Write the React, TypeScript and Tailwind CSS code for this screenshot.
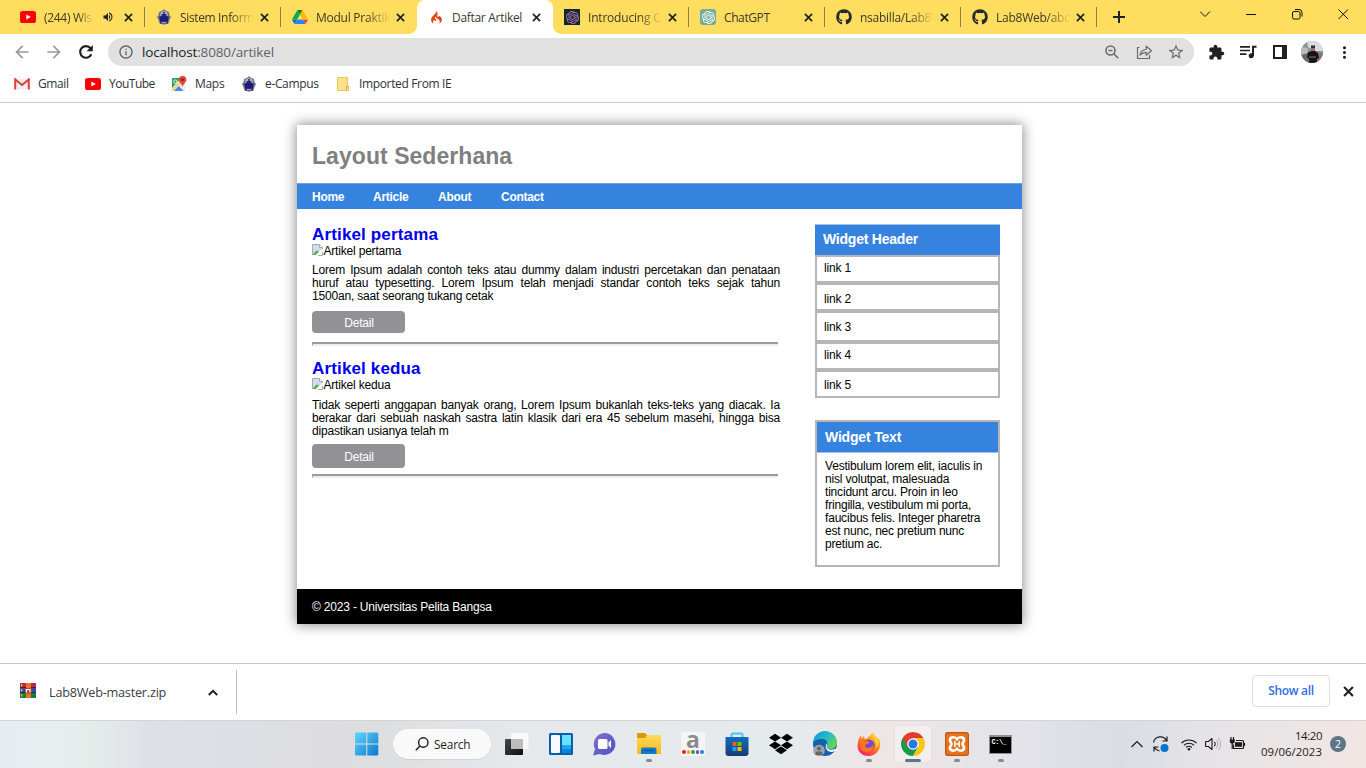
import React from "react";
import { MdArrowBack, MdArrowForward, MdInfoOutline, MdStarBorder, MdExtension, MdMoreVert, MdVolumeUp } from "react-icons/md";
import { FaDropbox, FaGithub } from "react-icons/fa";
import { SiCodeigniter, SiOpenai } from "react-icons/si";

const Cross = ({ size = 9, className = "" }: { size?: number; className?: string }) => (
  <svg className={className} width={size} height={size} viewBox="0 0 10 10" fill="none" stroke="#202124" strokeWidth="1.900">
    <path d="m1 1 8 8M9 1 1 9" />
  </svg>
);

const YouTube = () => (
  <svg width="16" height="12" viewBox="0 0 16 12">
    <rect width="16" height="12" rx="2.6" fill="#f00" />
    <path d="M6.3 3.4 10.8 6 6.3 8.6z" fill="#fff" />
  </svg>
);

const Campus = () => (
  <svg width="14" height="16" viewBox="0 0 14 16">
    <path d="M7 .3 9.200 1.800 12 3 12.500 6 14 8 12.600 11 11.500 14.600 7 15.700 2.500 14.600 1.400 11 0 8 1.500 6 2 3 4.800 1.800z" fill="#77768f" />
    <circle cx="7" cy="6" r="3.800" fill="#b9b5b8" />
    <path d="M6.200 3h1.600v2h1.700v2h-5V5h1.700z" fill="#2a2980" />
    <path d="M2.200 7.500 7 6.500l4.800 1-.8 4.500H3z" fill="#1e1d78" />
    <path d="M3 12.200h8v2.300H3z" fill="#1e1d78" />
    <path d="M4.500 13.200h5v1h-5z" fill="#d9b6a8" />
  </svg>
);

const Drive = () => (
  <svg width="16" height="14" viewBox="0 0 87.3 78">
    <path d="m6.6 66.85 3.85 6.65c.8 1.4 1.95 2.5 3.3 3.3l13.75-23.8h-27.5c0 1.55.4 3.1 1.2 4.5z" fill="#0066da" />
    <path d="m43.65 25-13.75-23.8c-1.35.8-2.5 1.9-3.3 3.3l-25.4 44a9.06 9.06 0 0 0 -1.2 4.5h27.5z" fill="#00ac47" />
    <path d="m73.55 76.8c1.35-.8 2.5-1.9 3.3-3.3l1.6-2.75 7.65-13.25c.8-1.4 1.2-2.95 1.2-4.5h-27.502l5.852 11.5z" fill="#ea4335" />
    <path d="m43.65 25 13.75-23.8c-1.35-.8-2.9-1.2-4.5-1.2h-18.5c-1.6 0-3.15.45-4.5 1.2z" fill="#00832d" />
    <path d="m59.8 53h-32.3l-13.75 23.8c1.35.8 2.9 1.2 4.5 1.2h50.8c1.6 0 3.15-.45 4.5-1.2z" fill="#2684fc" />
    <path d="m73.4 26.5-12.7-22c-.8-1.4-1.95-2.5-3.3-3.3l-13.75 23.8 16.15 28h27.45c0-1.55-.4-3.1-1.2-4.5z" fill="#ffba00" />
  </svg>
);

const Gmail = () => (
  <svg width="16" height="12" viewBox="0 0 16 12">
    <path d="M1 .5h14v11H1z" fill="#eeeeee" />
    <path d="M1.200 11.500V1.400L8 7l6.800-5.600v10.100" fill="none" stroke="#d8433a" strokeWidth="2" />
  </svg>
);

const Maps = () => (
  <svg width="16" height="16" viewBox="0 0 16 16">
    <rect x="1" y="2" width="13" height="13" rx="1" fill="#e8eaed" />
    <path d="M1 3a1 1 0 0 1 1-1h8L1 12z" fill="#1fa463" />
    <path d="M1 12.500 11 2.500l2 2L2 15a1 1 0 0 1-1-1z" fill="#fdd663" />
    <path d="M3 15 7.700 10l4.800 5z" fill="#4285f4" />
    <circle cx="4.4" cy="5.6" r="1.7" fill="none" stroke="#fff" strokeWidth=".9" />
    <path d="M11.600 0a3.800 3.800 0 0 1 3.800 3.800c0 2.700-3 3.800-3.800 7-.8-3.200-3.800-4.300-3.800-7A3.800 3.800 0 0 1 11.600 0z" fill="#e84435" />
    <circle cx="11.6" cy="3.8" r="1.3" fill="#7c1c15" />
  </svg>
);

const Folder = () => (
  <svg width="12" height="14" viewBox="0 0 12 14">
    <path d="M.5.5h10v9h1v4H.5z" fill="#ffe08a" stroke="#e8c65e" />
    <path d="M9.5 13.5v-4h2" fill="none" stroke="#dcae37" />
  </svg>
);

type Tab = { text: string; icon: React.ReactNode; width: string; track: string; active?: boolean; sound?: boolean; line?: boolean; full?: boolean };

const tabs: Tab[] = [
  { text: "(244) Wis", icon: <YouTube />, width: "w-[50px]", track: "tracking-[-0.3px]", sound: true, line: true },
  { text: "Sistem Inform", icon: <Campus />, width: "w-[74px]", track: "tracking-[-0.35px]", line: true },
  { text: "Modul Praktik", icon: <Drive />, width: "w-[74px]", track: "tracking-[-0.25px]" },
  { text: "Daftar Artikel", icon: <SiCodeigniter size={13} color="#dd4814" />, width: "w-[76px]", track: "tracking-[-0.3px]", active: true, full: true },
  { text: "Introducing C", icon: <span className="flex size-4 items-center justify-center bg-[#122b22]"><SiOpenai size={13} color="#c56fd3" /></span>, width: "w-[74px]", track: "tracking-[-0.2px]", line: true },
  { text: "ChatGPT", icon: <span className="flex size-4 items-center justify-center rounded-[3px] bg-[#75ac9d]"><SiOpenai size={13} color="#fff" /></span>, width: "w-[74px]", track: "tracking-[-0.4px]", line: true, full: true },
  { text: "nsabilla/Lab8W", icon: <FaGithub size={16} color="#24292f" />, width: "w-[74px]", track: "tracking-[-0.25px]", line: true },
  { text: "Lab8Web/abo", icon: <FaGithub size={16} color="#24292f" />, width: "w-[74px]", track: "tracking-[-0.25px]", line: true },
];

function TabStrip() {
  return (
    <div className="flex h-[34px] bg-[#ffdd5f] pl-[9px]">
      {tabs.map((t) => (
        <div key={t.text} className={`relative flex w-[136px] shrink-0 items-center pl-[11px] ${t.active ? "rounded-t-lg bg-white" : ""}`}>
          {t.active && (
            <>
              <span className="absolute bottom-0 -left-2 size-2 bg-[radial-gradient(circle_at_0_0,#ffdd5f_7.5px,#fff_8px)]" />
              <span className="absolute -right-2 bottom-0 size-2 bg-[radial-gradient(circle_at_100%_0,#ffdd5f_7.5px,#fff_8px)]" />
            </>
          )}
          <span className="flex w-4 justify-center">{t.icon}</span>
          <span className={`ml-2 overflow-hidden pt-px text-[12px] whitespace-nowrap text-[#3c3a2c] ${t.width} ${t.track} ${t.full ? "" : "[mask-image:linear-gradient(to_right,#000_68%,transparent)]"}`}>{t.text}</span>
          {t.sound && <MdVolumeUp size={12} color="#202124" className="ml-2" />}
          <Cross className="absolute left-[115px]" />
          {t.line && <span className="absolute top-[7px] right-0 h-5 w-px bg-[#8f7f45]" />}
        </div>
      ))}
      <svg className="mt-[11px] ml-4" width="12" height="12" viewBox="0 0 12 12" stroke="#202124" strokeWidth="2"><path d="M6 0v12M0 6h12" /></svg>
      <div className="mt-2 ml-auto flex h-3 items-center pr-[8px]">
        <svg width="159" height="12" viewBox="0 0 159 12" fill="none" stroke="#111" strokeWidth="1" className="-mr-px">
          <path d="M.5 3.500 5.500 8.500l5-5" transform="translate(-.5 0)" />
          <path d="M46 6.500h10" />
          <path d="M95 1.500h4a3 3 0 0 1 3 3v4" />
          <rect x="92.500" y="3.500" width="7.500" height="7.500" rx="1.500" />
          <path d="m138.500 1.500 9.500 9.500m0-9.500-9.500 9.500" />
        </svg>
      </div>
    </div>
  );
}

const Avatar = () => (
  <svg width="22" height="22" viewBox="0 0 22 22">
    <defs><clipPath id="av"><circle cx="11" cy="11" r="11" /></clipPath></defs>
    <g clipPath="url(#av)">
      <path d="M0 0h22v22H0z" fill="#8d9290" />
      <path d="M6 0h16v10H14L7 6z" fill="#d8dde2" />
      <path d="M0 6l7 1v6l-7 2z" fill="#b9bbb4" />
      <path d="M0 14l7-2 1 10H0z" fill="#646b63" />
      <path d="M16 12h6v10h-6z" fill="#8b7569" />
      <path d="M10 4.500h4v3h-4z" fill="#352c32" />
      <path d="M10 7h4v3.500h-4z" fill="#a06f60" />
      <path d="M7 11l4-1h3l3 2 1 5-2 1v4H8v-4l-2-2z" fill="#15161c" />
      <path d="M8 15.500h7v1H8z" fill="#93756d" />
    </g>
  </svg>
);

function Toolbar() {
  return (
    <div className="flex h-9 items-center bg-white">
      <MdArrowBack size={20} color="#9b9b9b" className="ml-3" />
      <MdArrowForward size={20} color="#9b9b9b" className="ml-3" />
      <svg className="ml-[14px]" width="16" height="16" viewBox="0 0 16 16" fill="none" stroke="#202124" strokeWidth="2.200">
        <path d="M13.300 10.200A5.800 5.800 0 1 1 12.500 4.300" /><path d="M14.800 1v6.200H8.600z" fill="#202124" stroke="none" />
      </svg>
      <div className="ml-[14px] flex h-7 w-[1086px] items-center rounded-full bg-[#e1e1e1] pl-[10px]">
        <MdInfoOutline size={16} color="#5f6368" />
        <span className="ml-[8px] text-[13.500px] tracking-[-0.150px] text-[#202124]">localhost<span className="text-[#5f6368]">:8080/artikel</span></span>
        <div className="ml-auto flex items-center pr-[9px] text-[#6a6c70]">
          <svg width="14" height="14" viewBox="0 0 14 14" fill="none" stroke="currentColor" strokeWidth="1.600"><circle cx="5.500" cy="5.500" r="4.500" /><path d="m9 9 4.300 4.300M3.500 5.500h4" /></svg>
          <svg className="ml-[17px]" width="16" height="16" viewBox="0 0 16 16" fill="none" stroke="currentColor" strokeWidth="1.200">
            <path d="M3.500 3.500h-2v11h12v-3.500" />
            <path d="M4 11c.6-3.600 2.800-5.300 6.200-5.500V2.200L15.500 6.700l-5.300 4.500V8.300C7.600 8.300 5.600 9.200 4 11z" strokeLinejoin="round" />
          </svg>
          <MdStarBorder size={18} className="ml-[15px]" />
        </div>
      </div>
      <MdExtension size={17} color="#202124" className="ml-[14px]" />
      <svg className="ml-[15px]" width="17" height="14" viewBox="0 0 17 14" fill="none" stroke="#202124" strokeWidth="1.700">
        <path d="M0 1.800h10M0 5.500h10M0 9.200h6.500" /><path d="M13 11V1.800h3.500" strokeWidth="2" /><circle cx="11.200" cy="10.800" r="2.500" fill="#202124" stroke="none" />
      </svg>
      <span className="ml-4 h-[14px] w-[14px] border-2 border-r-[5px] border-[#202124]" />
      <span className="ml-[14px]"><Avatar /></span>
      <MdMoreVert size={19} color="#202124" className="ml-[12px]" />
    </div>
  );
}

function Bookmarks() {
  return (
    <div className="flex h-[33px] items-start border-b border-[#c9c9c9] bg-white text-[12px] text-[#303236]">
      <div className="flex h-7 items-center">
        <span className="ml-[14px]"><Gmail /></span>
        <span className="ml-2 w-[47px] tracking-[-0.4px]">Gmail</span>
        <YouTube />
        <span className="ml-2 w-[62px] tracking-[-0.5px]">YouTube</span>
        <Maps />
        <span className="ml-2 w-[47px] tracking-[-0.3px]">Maps</span>
        <Campus />
        <span className="ml-[9px] w-[72px] tracking-[-0.350px]">e-Campus</span>
        <Folder />
        <span className="ml-[10px] tracking-[-0.350px] whitespace-nowrap">Imported From IE</span>
      </div>
    </div>
  );
}

const BrokenImage = () => (
  <svg width="12" height="12" viewBox="0 0 12 12">
    <path d="M.5 11V.5h7l3 3V5" fill="#cfdcf5" stroke="#a8a8a8" />
    <path d="M1 1h6v3h3v1L4 11H1z" fill="#cfdcf5" />
    <path d="M7.500.5v3h3" fill="#fff" stroke="#a8a8a8" />
    <path d="M1 10.500 4.500 6.500 7 7.500 3.500 11H1z" fill="#4caf3a" />
    <path d="M6 11.500h4.500V8" fill="none" stroke="#a8a8a8" />
  </svg>
);

function Article(p: { title: string; text: string; body: string; button: string; rule: string }) {
  return (
    <article className="flex flex-col">
      <h2 className="h-5 pt-px text-[17px] leading-5 font-bold tracking-[0.150px] text-[#0000ee]">{p.title}</h2>
      <div className="flex h-[13px] items-center leading-[13px]"><span className="mb-px"><BrokenImage /></span><span className="-ml-[0.5px] pt-[2px]">{p.title}</span></div>
      <p className={`h-[39px] w-[468px] text-justify ${p.text}`}>{p.body}</p>
      <a className={`flex w-[93px] items-center justify-center rounded bg-[#919196] pl-px text-white ${p.button}`}>Detail</a>
      <div className={`h-1 w-[466px] border-t-2 border-b border-l border-t-[#9c9c9c] border-b-[#ededed] border-l-[#9c9c9c] bg-[#ededed] ${p.rule}`} />
    </article>
  );
}

const links = [
  ["link 1", "h-7 pb-px"],
  ["link 2", "h-7 pt-1"],
  ["link 3", "h-[31px] pt-[2px]"],
  ["link 4", "h-7 pb-[2px]"],
  ["link 5", "h-7 pt-[3px]"],
];

function Page() {
  return (
    <main className="flex h-[560px] flex-col bg-white pt-[22px] pl-[297px] font-['Liberation_Sans',sans-serif] text-[12px] leading-[13px] tracking-[-0.190px] text-black">
      <div className="flex h-[499px] w-[725px] flex-col bg-white shadow-[0_0_12px_1px_rgba(0,0,0,0.450)]">
        <header className="flex h-[58px] items-center pt-[4px] pl-[15px] text-[23px] leading-7 font-bold tracking-[0.050px] text-[#808080]">Layout Sederhana</header>
        <nav className="flex h-[26px] items-center border-t border-[#6ea3e4] bg-[#3683df] pt-[2px] pl-[15px] font-bold tracking-[-0.280px] text-white">
          <span className="w-[61px]">Home</span><span className="w-[65px]">Article</span><span className="w-[63px]">About</span><span>Contact</span>
        </nav>
        <div className="flex h-[380px] justify-between pt-[15px] pr-[22px] pl-[15px]">
          <section className="flex flex-col gap-3">
            <Article title="Artikel pertama" text="mt-[7px]" button="mt-[8px] h-[22px] pt-[2px]" rule="mt-[9px]" body="Lorem Ipsum adalah contoh teks atau dummy dalam industri percetakan dan penataan huruf atau typesetting. Lorem Ipsum telah menjadi standar contoh teks sejak tahun 1500an, saat seorang tukang cetak" />
            <Article title="Artikel kedua" text="mt-[8px]" button="mt-[6px] h-6 pt-[3px]" rule="mt-[6px]" body="Tidak seperti anggapan banyak orang, Lorem Ipsum bukanlah teks-teks yang diacak. Ia berakar dari sebuah naskah sastra latin klasik dari era 45 sebelum masehi, hingga bisa dipastikan usianya telah m" />
          </section>
          <aside className="w-[185px]">
            <h3 className="flex h-[31px] items-center border-t border-[#9dc2ef] bg-[#3683df] pb-[2px] pl-2 text-[14px] font-bold tracking-[-0.230px] text-white">Widget Header</h3>
            <ul>
              {links.map(([label, cls]) => (
                <li key={label} className={`flex items-center border-2 border-[#b6b6b6] pl-[7px] ${cls}`}>{label}</li>
              ))}
            </ul>
            <div className="mt-[22px] h-[147px] border-2 border-[#b6b6b6]">
              <h3 className="flex h-[31px] items-center border-b border-[#9dc2ef] bg-[#3683df] pl-2 text-[14px] font-bold tracking-[-0.180px] text-white">Widget Text</h3>
              <p className="mt-[7px] pl-2 whitespace-nowrap">
                Vestibulum lorem elit, iaculis in<br />nisl volutpat, malesuada<br />tincidunt arcu. Proin in leo<br />fringilla, vestibulum mi porta,<br />faucibus felis. Integer pharetra<br />est nunc, nec pretium nunc<br />pretium ac.
              </p>
            </div>
          </aside>
        </div>
        <footer className="flex h-[35px] items-center bg-black pt-[2px] pl-[15px] text-white">© 2023 - Universitas Pelita Bangsa</footer>
      </div>
    </main>
  );
}

const WinRar = () => (
  <svg width="16" height="15" viewBox="0 0 16 15">
    <path d="M0 0h16v5H0z" fill="#c4214f" /><path d="M0 5h16v5H0z" fill="#3f48a8" /><path d="M0 10h16v5H0z" fill="#188038" />
    <path d="M0 4.500h16M0 9.700h16" stroke="#222" strokeWidth=".8" />
    <path d="M6 0h5v15H6z" fill="#e8741c" />
    <path d="M5 5h6.500v5.500H5z" fill="#b54331" /><path d="M6.500 9.500V6.500h3.500v3" fill="none" stroke="#fff" strokeWidth="1.200" />
    <path d="M1.700 1v2.500M1.700 6v2.500M1.700 11v2.500" stroke="#f2dd55" />
  </svg>
);

function Downloads() {
  return (
    <div className="flex h-[57px] items-center border-t border-[#c9c9c9] bg-white text-[#3c4043]">
      <span className="mb-[3px] ml-5"><WinRar /></span>
      <span className="ml-[13px] w-[159px] pt-px text-[12.700px] tracking-[-0.230px]">Lab8Web-master.zip</span>
      <svg width="10" height="7" viewBox="0 0 10 7" fill="none" stroke="#202124" strokeWidth="2"><path d="M.8 6 5 1.800 9.200 6" /></svg>
      <span className="ml-[18px] h-11 w-px bg-[#b8b8b8]" />
      <span className="mb-[2px] ml-auto flex h-8 w-[78px] items-center justify-center rounded border border-[#dadce0] text-[12px] font-semibold tracking-[-0.330px] text-[#2b6fe6]">Show all</span>
      <Cross size={11} className="mr-[12px] mb-[2px] ml-[13px]" />
    </div>
  );
}

const Start = () => (
  <svg width="24" height="24" viewBox="0 0 24 24">
    <defs><linearGradient id="st" x1="0" y1="0" x2="24" y2="24" gradientUnits="userSpaceOnUse"><stop stopColor="#5fd8fb" /><stop offset="1" stopColor="#0a74cf" /></linearGradient></defs>
    <path d="M0 1.500.8.500H11.300V11.500H0zM12.300.5H22.500l.8.8V11.500H12.300zM0 12.500H11.300V23.500H.8L0 22.700zM12.300 12.500H23.300V22.700l-.8.8H12.300z" fill="url(#st)" />
  </svg>
);
const TaskView = () => (
  <svg width="24" height="24" viewBox="0 0 24 24">
    <defs><linearGradient id="tv" x1="0" y1="0" x2="1" y2="1"><stop stopColor="#4b4b4b" /><stop offset="1" stopColor="#0c0c0c" /></linearGradient></defs>
    <rect y="7" width="18" height="16" rx="1" fill="url(#tv)" /><rect x="6" y="1" width="17.500" height="16" rx="1" fill="#f9f9f9" /><path d="M6 7h12v10H6z" fill="#bdbdbd" />
  </svg>
);
const Widgets = () => (
  <svg width="24" height="24" viewBox="0 0 24 24">
    <rect y="1" width="24" height="22" rx="1.500" fill="#075fae" /><rect x="2" y="3" width="9" height="18" rx="1" fill="#f6fafd" /><path d="M13 3h9v10h-9z" fill="#6be0ff" /><path d="M13 13h9v4h-9z" fill="#1ca5f2" /><path d="M13 17h9v4h-9z" fill="#0b82df" />
  </svg>
);
const Chat = () => (
  <svg width="24" height="24" viewBox="0 0 24 24">
    <defs><linearGradient id="ch" x1="0" y1="0" x2="1" y2="1"><stop stopColor="#8c6bc8" /><stop offset="1" stopColor="#4855cc" /></linearGradient></defs>
    <path d="M11.500 1a11 11 0 1 1-4.700 21L0 23.500 2 17A11 11 0 0 1 11.500 1z" fill="url(#ch)" /><rect x="5" y="7" width="9.500" height="10" rx="1.500" fill="#fff" /><path d="M15.500 10.500 18 8v8l-2.500-2.500z" fill="#fff" />
  </svg>
);
const Explorer = () => (
  <svg width="24" height="24" viewBox="0 0 24 24">
    <defs><linearGradient id="ex" x1="0" y1="0" x2="0" y2="1"><stop stopColor="#ffd95e" /><stop offset="1" stopColor="#f9b916" /></linearGradient></defs>
    <path d="M0 2a1 1 0 0 1 1-1h7l2 2v5H0z" fill="#d99b00" /><path d="M0 6h8l2.500-3H23a1 1 0 0 1 1 1v18H1a1 1 0 0 1-1-1z" fill="url(#ex)" /><path d="M4 22v-4.500A2 2 0 0 1 6 15.500h11.500a2 2 0 0 1 2 2V22z" fill="#1478c8" /><path d="M7 18.500h9.500" stroke="#0b559f" strokeWidth="1.200" />
  </svg>
);
const Amazon = () => (
  <span className="flex size-6 flex-col items-center bg-[#f5f5f5]">
    <span className="-mt-[4px] h-[22px] font-['Open_Sans',sans-serif] text-[23px] leading-[22px] font-bold text-[#8b8b8b]">a</span>
    <span className="flex gap-px">
      <i className="size-[3.500px] rounded-full bg-[#ef1b1b]" /><i className="size-[3.500px] rounded-full bg-[#f7a221]" /><i className="size-[3.500px] rounded-full bg-[#21a64c]" /><i className="size-[3.500px] rounded-full bg-[#853ccb]" /><i className="size-[3.500px] rounded-full bg-[#1588e0]" />
    </span>
  </span>
);
const Store = () => (
  <svg width="24" height="24" viewBox="0 0 24 24">
    <defs><linearGradient id="so" x1="0" y1="0" x2="0" y2="1"><stop stopColor="#1070bd" /><stop offset="1" stopColor="#173b73" /></linearGradient></defs>
    <path d="M6.500 6V3a1.500 1.500 0 0 1 1.500-1.500h8A1.500 1.500 0 0 1 17.500 3v3" fill="none" stroke="#41c6f5" strokeWidth="2" /><path d="M.5 5h23v16a3 3 0 0 1-3 3h-17a3 3 0 0 1-3-3z" fill="url(#so)" />
    <path d="M7.500 10h4v4h-4z" fill="#f15a24" /><path d="M12.500 10h4v4h-4z" fill="#7fba00" /><path d="M7.500 15h4v4h-4z" fill="#13a5ee" /><path d="M12.500 15h4v4h-4z" fill="#ffb900" />
  </svg>
);
const Edge = () => (
  <svg width="26" height="26" viewBox="0 0 26 26">
    <defs><linearGradient id="e1" x1="0" y1="0" x2="1" y2=".6"><stop stopColor="#1692d8" /><stop offset=".55" stopColor="#25b9c9" /><stop offset="1" stopColor="#65d455" /></linearGradient></defs>
    <circle cx="13" cy="13" r="12" fill="#1160ae" />
    <path d="M1 12A12 12 0 0 1 25 12c0 4-3 6-6.500 6-3 0-4.300-1.400-3.500-3 1.400-3 0-6.500-4-7C6.500 7.500 2.500 9 1 12z" fill="url(#e1)" />
    <path d="M14.500 12c.8 2 0 3.200.3 4.300 1 2.700 5.600 3.400 10.400.7l-.8 2.500-4 1.500c-5 .5-8.400-4-5.900-9z" fill="#edf4f7" />
    <circle cx="7" cy="19.500" r="5.800" fill="#a1a3a5" /><circle cx="7" cy="17.500" r="2.100" fill="#666" /><path d="M3.500 24v-1.500a2 2 0 0 1 2-2h3a2 2 0 0 1 2 2V24z" fill="#666" />
  </svg>
);
const Firefox = () => (
  <svg width="24" height="24" viewBox="0 0 24 24">
    <defs><linearGradient id="ff" x1=".8" y1="0" x2=".2" y2="1"><stop stopColor="#ffe636" /><stop offset=".45" stopColor="#ff8a1e" /><stop offset="1" stopColor="#f4146c" /></linearGradient></defs>
    <path d="M15.500 0c1 3 3.700 3.500 5.500 7l.5-1c4.500 7 0 18-10 18C4 24-.5 18 .8 11.500 1 8 2.500 5 4 3l.5 3.500L7 4l.8 3L10 6.500C11 4 14 3.500 15.500 0z" fill="url(#ff)" />
    <path d="M7.500 9.500C10 5.500 17.500 8 17.500 13c0 4-3 6-6 6s-5.500-2-5.500-5z" fill="#7149d4" />
    <path d="M3 8c4-1.500 7 .2 9.500 2.500-1 2-4 1-4.500 3 1 4 7 3 8-1.500 3 7-8 11-12.500 5z" fill="#fb751f" />
    <path d="M15 3c3 3 6 8 3.500 13 5-3 3-9-3.500-13z" fill="#ffda38" />
  </svg>
);
const Chrome = () => (
  <svg width="24" height="24" viewBox="0 0 24 24">
    <path d="M1.610 6A12 12 0 0 1 22.390 6H12z" fill="#e33b2e" />
    <path d="M12 12 1.610 6A12 12 0 0 0 12 24l5.200-9z" fill="#1c9949" />
    <path d="M1.610 6 6.800 15 12 6z" fill="#e33b2e" />
    <path d="M22.390 6H12l5.200 9L12 24A12 12 0 0 0 22.390 6z" fill="#fcc51c" />
    <circle cx="12" cy="12" r="5.800" fill="#fff" /><circle cx="12" cy="12" r="4.500" fill="#2878eb" />
  </svg>
);
const Xampp = () => (
  <svg width="24" height="24" viewBox="0 0 24 24">
    <rect width="24" height="24" rx="2.500" fill="#e67320" /><rect x=".7" y=".7" width="22.600" height="22.600" rx="2" fill="none" stroke="#b84f0c" />
    <path d="M12 7.300C10 4 4.500 5 5 8.500c.2 1.500 1.500 2 1.500 3.500S5 14 5 15.500c-.5 3.500 5 4.500 7 1.200 2 3.300 7.500 2.300 7-1.200 0-1.500-1.500-2-1.500-3.500s1.300-2 1.500-3.500c.5-3.500-5-4.500-7-1.200z" fill="none" stroke="#fff" strokeWidth="2.600" strokeLinejoin="round" /><path d="M9.800 9v6M14.200 9v6M9.800 12h4.400" fill="none" stroke="#fff" strokeWidth="1.600" />
  </svg>
);
const Cmd = () => (
  <span className="mr-[2px] h-[19px] w-[23px] border border-t-2 border-[#8b9299] bg-black pl-[2px] font-['Liberation_Mono',monospace] text-[7px] leading-[10px] font-bold tracking-[-0.500px] text-white">C:\_</span>
);

const apps: { node: React.ReactNode; bar?: string }[] = [
  { node: <TaskView /> }, { node: <Widgets /> }, { node: <Chat /> },
  { node: <Explorer />, bar: "w-[6px] bg-[#878a8c]" }, { node: <Amazon /> }, { node: <Store /> },
  { node: <FaDropbox size={24} color="#000" /> }, { node: <Edge /> },
  { node: <Firefox />, bar: "w-[6px] bg-[#878a8c]" }, { node: <Chrome />, bar: "w-4 bg-[#5b7687]" },
  { node: <Xampp />, bar: "w-[6px] bg-[#878a8c]" }, { node: <Cmd />, bar: "w-[6px] bg-[#878a8c]" },
];

function Tray() {
  return (
    <div className="ml-auto flex items-center pr-[20px] text-[#1b1b1b]">
      <svg width="12" height="8" viewBox="0 0 12 8" fill="none" stroke="currentColor" strokeWidth="1.200"><path d="m.5 7 5.500-5.500L11.500 7" /></svg>
      <svg className="ml-[9px]" width="18" height="18" viewBox="0 0 18 18" fill="none" stroke="currentColor" strokeWidth="1.200">
        <path d="M1.500 7.500A7 7 0 0 1 14.500 5.500M15 1.500V6H10.500M7.500 16A7 7 0 0 1 2.500 12.500M2 16.500V12H6.500" /><circle cx="12.500" cy="13" r="4" fill="#0875d1" stroke="none" />
      </svg>
      <svg className="ml-[11px]" width="16" height="13" viewBox="0 0 16 13" fill="none" stroke="currentColor" strokeWidth="1.100">
        <path d="M.5 5.200a10.500 10.500 0 0 1 15 0M2.900 7.400a7.300 7.300 0 0 1 10.200 0M5.200 9.500a4 4 0 0 1 5.600 0" /><circle cx="8" cy="11.200" r="1.300" fill="currentColor" stroke="none" />
      </svg>
      <svg className="ml-[8px]" width="16" height="14" viewBox="0 0 16 14" fill="none" stroke="currentColor" strokeWidth="1.100">
        <path d="M.6 4.500h2.800L7 1.500v11L3.400 9.500H.6z" strokeLinejoin="round" /><path d="M9.500 4.800a4 4 0 0 1 0 4.400" /><path d="M11.500 3a7 7 0 0 1 0 8M13.500 1a10 10 0 0 1 0 12" stroke="#b5b3b5" />
      </svg>
      <svg className="ml-[8px]" width="17" height="14" viewBox="0 0 17 14" fill="none" stroke="currentColor" strokeWidth="1.200">
        <path d="M7 3.500h6.500a1 1 0 0 1 1 1v6a1 1 0 0 1-1 1h-9V7.500M15.500 6v3" /><path d="M6 5.200h7v4.600H6z" fill="currentColor" stroke="none" /><path d="M2 0v3M4.500 0v3M3.200 6v6" /><path d="M.8 2.500h5v2a2 2 0 0 1-2 2h-1a2 2 0 0 1-2-2z" fill="currentColor" stroke="none" />
      </svg>
      <div className="mb-px ml-[14px] w-[62px] text-right text-[11.400px] leading-4 tracking-[0.050px] whitespace-nowrap"><span className="tracking-[-0.400px]">14:20</span><br />09/06/2023</div>
      <span className="ml-2 flex size-4 items-center justify-center rounded-full bg-[#5d7585] text-[10.500px] leading-none text-white">2</span>
    </div>
  );
}

function Taskbar() {
  return (
    <div className="flex h-12 items-center border-t border-[#d2d5d7] bg-[linear-gradient(90deg,#e6edf2_0%,#e6eeec_6%,#dfe0e7_11%,#dddde0_25%,#dedfe1_29%,#e5e9ec_38%,#e5eaed_58%,#efe5e5_65%,#e5e4e9_73%,#dadde4_82%,#e5e3e7_88%,#f1e6e3_100%)] pb-px pl-[355px]">
      <Start />
      <div className="ml-[14px] flex h-[30px] w-[98px] items-center rounded-full bg-[#f9f9fa] pl-[22px] text-[11.800px] tracking-[-0.150px] text-[#242424] shadow-[0_1px_1px_rgba(0,0,0,0.080)]">
        <svg width="14" height="14" viewBox="0 0 14 14" fill="none" stroke="#1b1b1b" strokeWidth="1.400"><circle cx="8.300" cy="5.500" r="4.700" /><path d="M5 9 .8 13.300" /></svg>
        <span className="ml-[5px] pt-px">Search</span>
      </div>
      <div className="ml-1 flex h-full">
        {apps.map((a, i) => (
          <div key={i} className="relative flex w-11 items-center justify-center">
            {i === 9 && <span className="absolute inset-x-[3px] top-[4px] bottom-[4px] rounded border border-[#e6e1e3] bg-[#f4efef]" />}
            <span className="relative flex">{a.node}</span>
            {a.bar && <span className={`absolute bottom-[5px] h-[3px] rounded-full ${a.bar}`} />}
          </div>
        ))}
      </div>
      <Tray />
    </div>
  );
}

export default function App() {
  return (
    <div className="h-[768px] w-[1366px] overflow-hidden bg-white font-['Open_Sans',sans-serif] leading-normal">
      <TabStrip />
      <Toolbar />
      <Bookmarks />
      <Page />
      <Downloads />
      <Taskbar />
    </div>
  );
}
